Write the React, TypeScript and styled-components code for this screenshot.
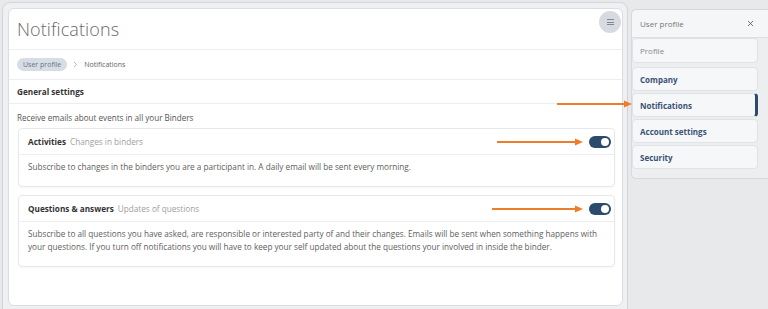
import styled, { createGlobalStyle } from "styled-components";
import { ChevronRight, X } from "lucide-react";

const GlobalStyle = createGlobalStyle`
  html, body {
    margin: 0;
    padding: 0;
  }
  body {
    background: #e8e9eb;
    font-family: "Open Sans", "Liberation Sans", sans-serif;
    width: 768px;
    height: 309px;
    overflow: hidden;
  }
`;

const Page = styled.div`
  position: relative;
  display: flex;
  align-items: flex-start;
  height: 309px;
  padding: 2px 0 0 2px;
  box-sizing: border-box;
`;

const Frame = styled.div`
  width: 626px;
  height: 320px;
  flex-shrink: 0;
  box-sizing: border-box;
  border: 1px solid #d2d5da;
  border-radius: 8px;
  background: #eef0f2;
  padding: 5px 4px 0 5px;
`;

const Card = styled.div`
  height: 298px;
  box-sizing: border-box;
  background: #fff;
  border: 1px solid #dadde2;
  border-radius: 6px;
  display: flex;
  flex-direction: column;
`;

const Header = styled.div`
  height: 40px;
  display: flex;
  align-items: center;
  justify-content: space-between;
  padding: 0 1px 0 8px;
  border-bottom: 1px solid #eceef0;
`;

const Title = styled.h1`
  margin: 0;
  font-size: 18px;
  font-weight: 300;
  color: #6a6a6a;
  letter-spacing: 0.1px;
`;

const MenuButton = styled.div`
  align-self: flex-start;
  margin-top: 2px;
  width: 22px;
  height: 22px;
  border-radius: 50%;
  background: #d7dbe1;
  display: flex;
  flex-direction: column;
  align-items: center;
  justify-content: center;
  gap: 1.5px;
`;

const MenuLine = styled.span`
  width: 7px;
  height: 1px;
  background: #7f8893;
`;

const Crumbs = styled.div`
  height: 29px;
  display: flex;
  align-items: center;
  gap: 4px;
  padding-left: 8px;
  border-bottom: 1px solid #eceef0;
  font-size: 7px;
  color: #666;
`;

const Pill = styled.span`
  height: 13px;
  line-height: 13px;
  padding: 0 6px;
  border-radius: 7px;
  background: #d7dde5;
  color: #6b7480;
`;

const SectionHead = styled.div`
  height: 23px;
  display: flex;
  align-items: center;
  padding-left: 8px;
  border-bottom: 1px solid #eceef0;
  font-size: 8.2px;
  font-weight: 700;
  color: #333;
`;

const Section = styled.div`
  display: flex;
  flex-direction: column;
  gap: 8px;
  padding: 8px 7px 0 9px;
`;

const Intro = styled.p`
  margin: 0 0 -4px -1px;
  font-size: 8.1px;
  line-height: 12px;
  color: #555;
`;

const SettingCard = styled.div`
  border: 1px solid #e6e8eb;
  border-radius: 4px;
  box-shadow: 0 1px 2px rgba(0, 0, 0, 0.04);
`;

const SettingHead = styled.div`
  height: 25px;
  display: flex;
  align-items: center;
  gap: 4px;
  padding: 0 3px 0 9px;
  border-bottom: 1px solid #eceef0;
  font-size: 8.2px;
`;

const SettingName = styled.span`
  font-weight: 700;
  color: #333;
`;

const SettingSub = styled.span`
  flex: 1;
  color: #a0a0a0;
`;

const SettingBody = styled.p`
  margin: 0;
  padding: 5px 9px 13px;
  font-size: 8.2px;
  line-height: 13px;
  color: #606060;
`;

const Toggle = styled.span`
  margin-left: 2px;
  width: 22px;
  height: 12px;
  border-radius: 6px;
  background: #2c4a6c;
  display: flex;
  align-items: center;
  justify-content: flex-end;
  padding: 0 2px;
  box-sizing: border-box;

  &::after {
    content: "";
    width: 8px;
    height: 8px;
    border-radius: 50%;
    background: #fff;
  }
`;

const Panel = styled.div`
  width: 137px;
  margin: 7px 0 0 3px;
  box-sizing: border-box;
  border: 1px solid #d5d8dd;
  border-right: none;
  border-radius: 5px 0 0 5px;
  background: #eceef0;
  padding-bottom: 9px;
  font-size: 8px;
`;

const PanelHead = styled.div`
  height: 27px;
  display: flex;
  align-items: center;
  justify-content: space-between;
  padding: 0 13px 0 8px;
  background: #f5f6f7;
  border-radius: 5px 0 0 0;
  border-bottom: 1px solid #dcdfe3;
  color: #777;
`;

const NavList = styled.div`
  display: flex;
  flex-direction: column;
  gap: 2px;
  padding-right: 10px;
`;

const NavItem = styled.div<{ $active?: boolean; $muted?: boolean }>`
  height: 24px;
  display: flex;
  align-items: center;
  padding-left: 7px;
  box-sizing: border-box;
  background: #f6f7f8;
  border: 1px solid #dfe2e6;
  border-right: ${(p) => (p.$active ? "3px solid #2c4a6c" : "1px solid #dfe2e6")};
  border-radius: 4px;
  font-weight: ${(p) => (p.$muted ? 400 : 700)};
  color: ${(p) => (p.$muted ? "#888" : "#3b5274")};

  &:first-child {
    height: 25px;
    margin-bottom: 2px;
  }
`;

const Pointer = styled.svg`
  flex-shrink: 0;
`;

const FloatingPointer = styled(Pointer)`
  position: absolute;
  left: 557px;
  top: 100px;
`;

function Arrow({ width, className }: { width: number; className?: string }) {
  return (
    <Pointer className={className} width={width} height={8} viewBox={`0 0 ${width} 8`}>
      <line x1="0" y1="4" x2={width - 6} y2="4" stroke="#ee7d2b" strokeWidth="1.8" />
      <polygon points={`${width - 8},0.5 ${width},4 ${width - 8},7.5`} fill="#ee7d2b" />
    </Pointer>
  );
}

const settings = [
  {
    name: "Activities",
    sub: "Changes in binders",
    arrow: 86,
    text: "Subscribe to changes in the binders you are a participant in. A daily email will be sent every morning.",
  },
  {
    name: "Questions & answers",
    sub: "Updates of questions",
    arrow: 91,
    text: "Subscribe to all questions you have asked, are responsible or interested party of and their changes. Emails will be sent when something happens with your questions. If you turn off notifications you will have to keep your self updated about the questions your involved in inside the binder.",
  },
];

export default function App() {
  return (
    <Page>
      <GlobalStyle />
      <Frame>
        <Card>
          <Header>
            <Title>Notifications</Title>
            <MenuButton>
              <MenuLine />
              <MenuLine />
              <MenuLine />
            </MenuButton>
          </Header>
          <Crumbs>
            <Pill>User profile</Pill>
            <ChevronRight size={9} color="#777" strokeWidth={1.5} />
            <span>Notifications</span>
          </Crumbs>
          <SectionHead>General settings</SectionHead>
          <Section>
            <Intro>Receive emails about events in all your Binders</Intro>
            {settings.map((s) => (
              <SettingCard key={s.name}>
                <SettingHead>
                  <SettingName>{s.name}</SettingName>
                  <SettingSub>{s.sub}</SettingSub>
                  <Arrow width={s.arrow} />
                  <Toggle />
                </SettingHead>
                <SettingBody>{s.text}</SettingBody>
              </SettingCard>
            ))}
          </Section>
        </Card>
      </Frame>
      <Panel>
        <PanelHead>
          <span>User profile</span>
          <X size={9} color="#444" strokeWidth={2} />
        </PanelHead>
        <NavList>
          <NavItem $muted>Profile</NavItem>
          <NavItem>Company</NavItem>
          <NavItem $active>Notifications</NavItem>
          <NavItem>Account settings</NavItem>
          <NavItem>Security</NavItem>
        </NavList>
      </Panel>
      <FloatingPointer as={Arrow} width={75} />
    </Page>
  );
}
